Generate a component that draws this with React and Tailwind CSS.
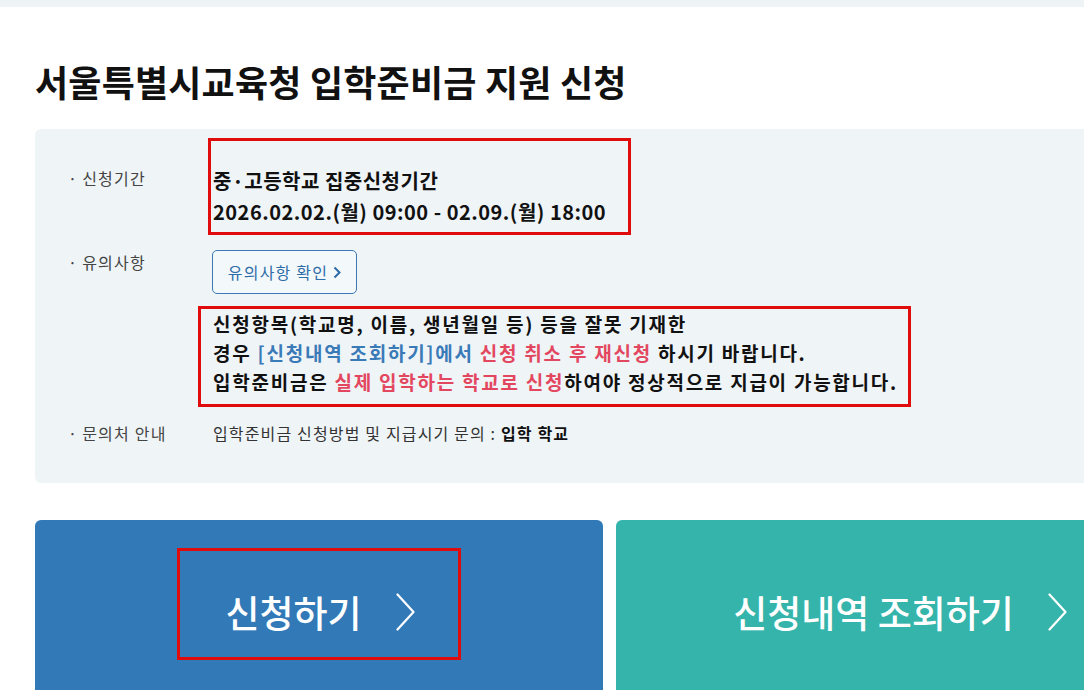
import React from 'react';

const Chevron = ({ className }) => (
  <svg className={className} viewBox="0 0 19 38" fill="none" stroke="currentColor" strokeWidth="2.2" strokeLinecap="round" strokeLinejoin="round">
    <polyline points="1.5,1.5 17.5,19 1.5,36.5" />
  </svg>
);

const Label = ({ children, className = '' }) => (
  <div className={`w-[143px] shrink-0 text-[16px] leading-[24px] tracking-[1.2px] text-[#444] ${className}`}>
    <span className="mr-[4px] -ml-[2px]">·</span>
    {children}
  </div>
);

const App = () => {
  return (
    <div className="w-[1084px] h-[690px] overflow-hidden bg-white font-['Noto_Sans_CJK_KR','Noto_Sans',sans-serif] text-[#222]">
      <div className="h-[7px] bg-[#eef3f6]" />
      <div className="w-[1149px] ml-[35px]">
        <h1 className="pt-[50px] text-[36px] font-bold leading-[48px] tracking-[0.2px] text-[#111]">
          서울특별시교육청 입학준비금 지원 신청
        </h1>

        <div className="mt-[24px] rounded-md bg-[#eff4f7] pl-[35px] pt-[9px] pb-[38px]">
          {/* 신청기간 */}
          <div className="flex">
            <Label className="mt-[28px]">신청기간</Label>
            <div className="-ml-[5px] w-[423px] h-[97px] border-[3px] border-[#e00b0b] pl-[2px] pt-[24px] text-[20px] font-bold leading-[31px] tracking-[0.5px] text-[#111]">
              <div>중·고등학교 집중신청기간</div>
              <div>2026.02.02.(월) 09:00 - 02.09.(월) 18:00</div>
            </div>
          </div>

          {/* 유의사항 */}
          <div className="flex mt-[15px]">
            <Label>유의사항</Label>
            <div className="-ml-[1px] flex h-[44px] w-[145px] items-center justify-center gap-[5px] rounded-[5px] border border-[#3b79b6] bg-[#f3f8fb] text-[16px] tracking-[1.2px] text-[#2e6ca8]">
              <span>유의사항 확인</span>
              <svg className="w-[8px] h-[13px]" viewBox="0 0 8 13" fill="none" stroke="currentColor" strokeWidth="2">
                <polyline points="1.5,1.5 6.5,6.5 1.5,11.5" />
              </svg>
            </div>
          </div>

          <div className="ml-[128px] mt-[12px] w-[713px] h-[101px] border-[3px] border-[#e00b0b] pl-[12px] text-[19px] font-bold leading-[29px] tracking-[1.75px] text-[#111]">
            <div>신청항목(학교명, 이름, 생년월일 등) 등을 잘못 기재한</div>
            <div>
              경우 <span className="text-[#3a7ab7]">[신청내역 조회하기]에서</span>{' '}
              <span className="text-[#e3475f]">신청 취소 후 재신청</span> 하시기 바랍니다.
            </div>
            <div>
              입학준비금은 <span className="text-[#e3475f]">실제 입학하는 학교로 신청</span>하여야 정상적으로 지급이 가능합니다.
            </div>
          </div>

          {/* 문의처 안내 */}
          <div className="flex mt-[14px]">
            <Label>문의처 안내</Label>
            <div className="text-[16px] leading-[24px] tracking-[1.15px] text-[#333]">
              입학준비금 신청방법 및 지급시기 문의 : <span className="font-bold text-[#111]">입학 학교</span>
            </div>
          </div>
        </div>

        <div className="mt-[37px] grid grid-cols-2 gap-[13px]">
          <div className="flex h-[184px] items-start justify-center pt-[28px] rounded-t-md bg-[#3279b8] text-white">
            <div className="flex h-[112px] w-[284px] items-center justify-center gap-[34px] border-[3px] border-[#e00b0b] pl-[2px] pt-[16px]">
              <span className="text-[37px] font-medium leading-none">신청하기</span>
              <Chevron className="w-[19px] h-[38px]" />
            </div>
          </div>
          <div className="flex h-[184px] items-center justify-center gap-[34px] rounded-t-md bg-[#34b4aa] text-white">
            <span className="text-[37px] font-medium leading-none">신청내역 조회하기</span>
            <Chevron className="w-[19px] h-[38px]" />
          </div>
        </div>
      </div>
    </div>
  );
};

export default App;
